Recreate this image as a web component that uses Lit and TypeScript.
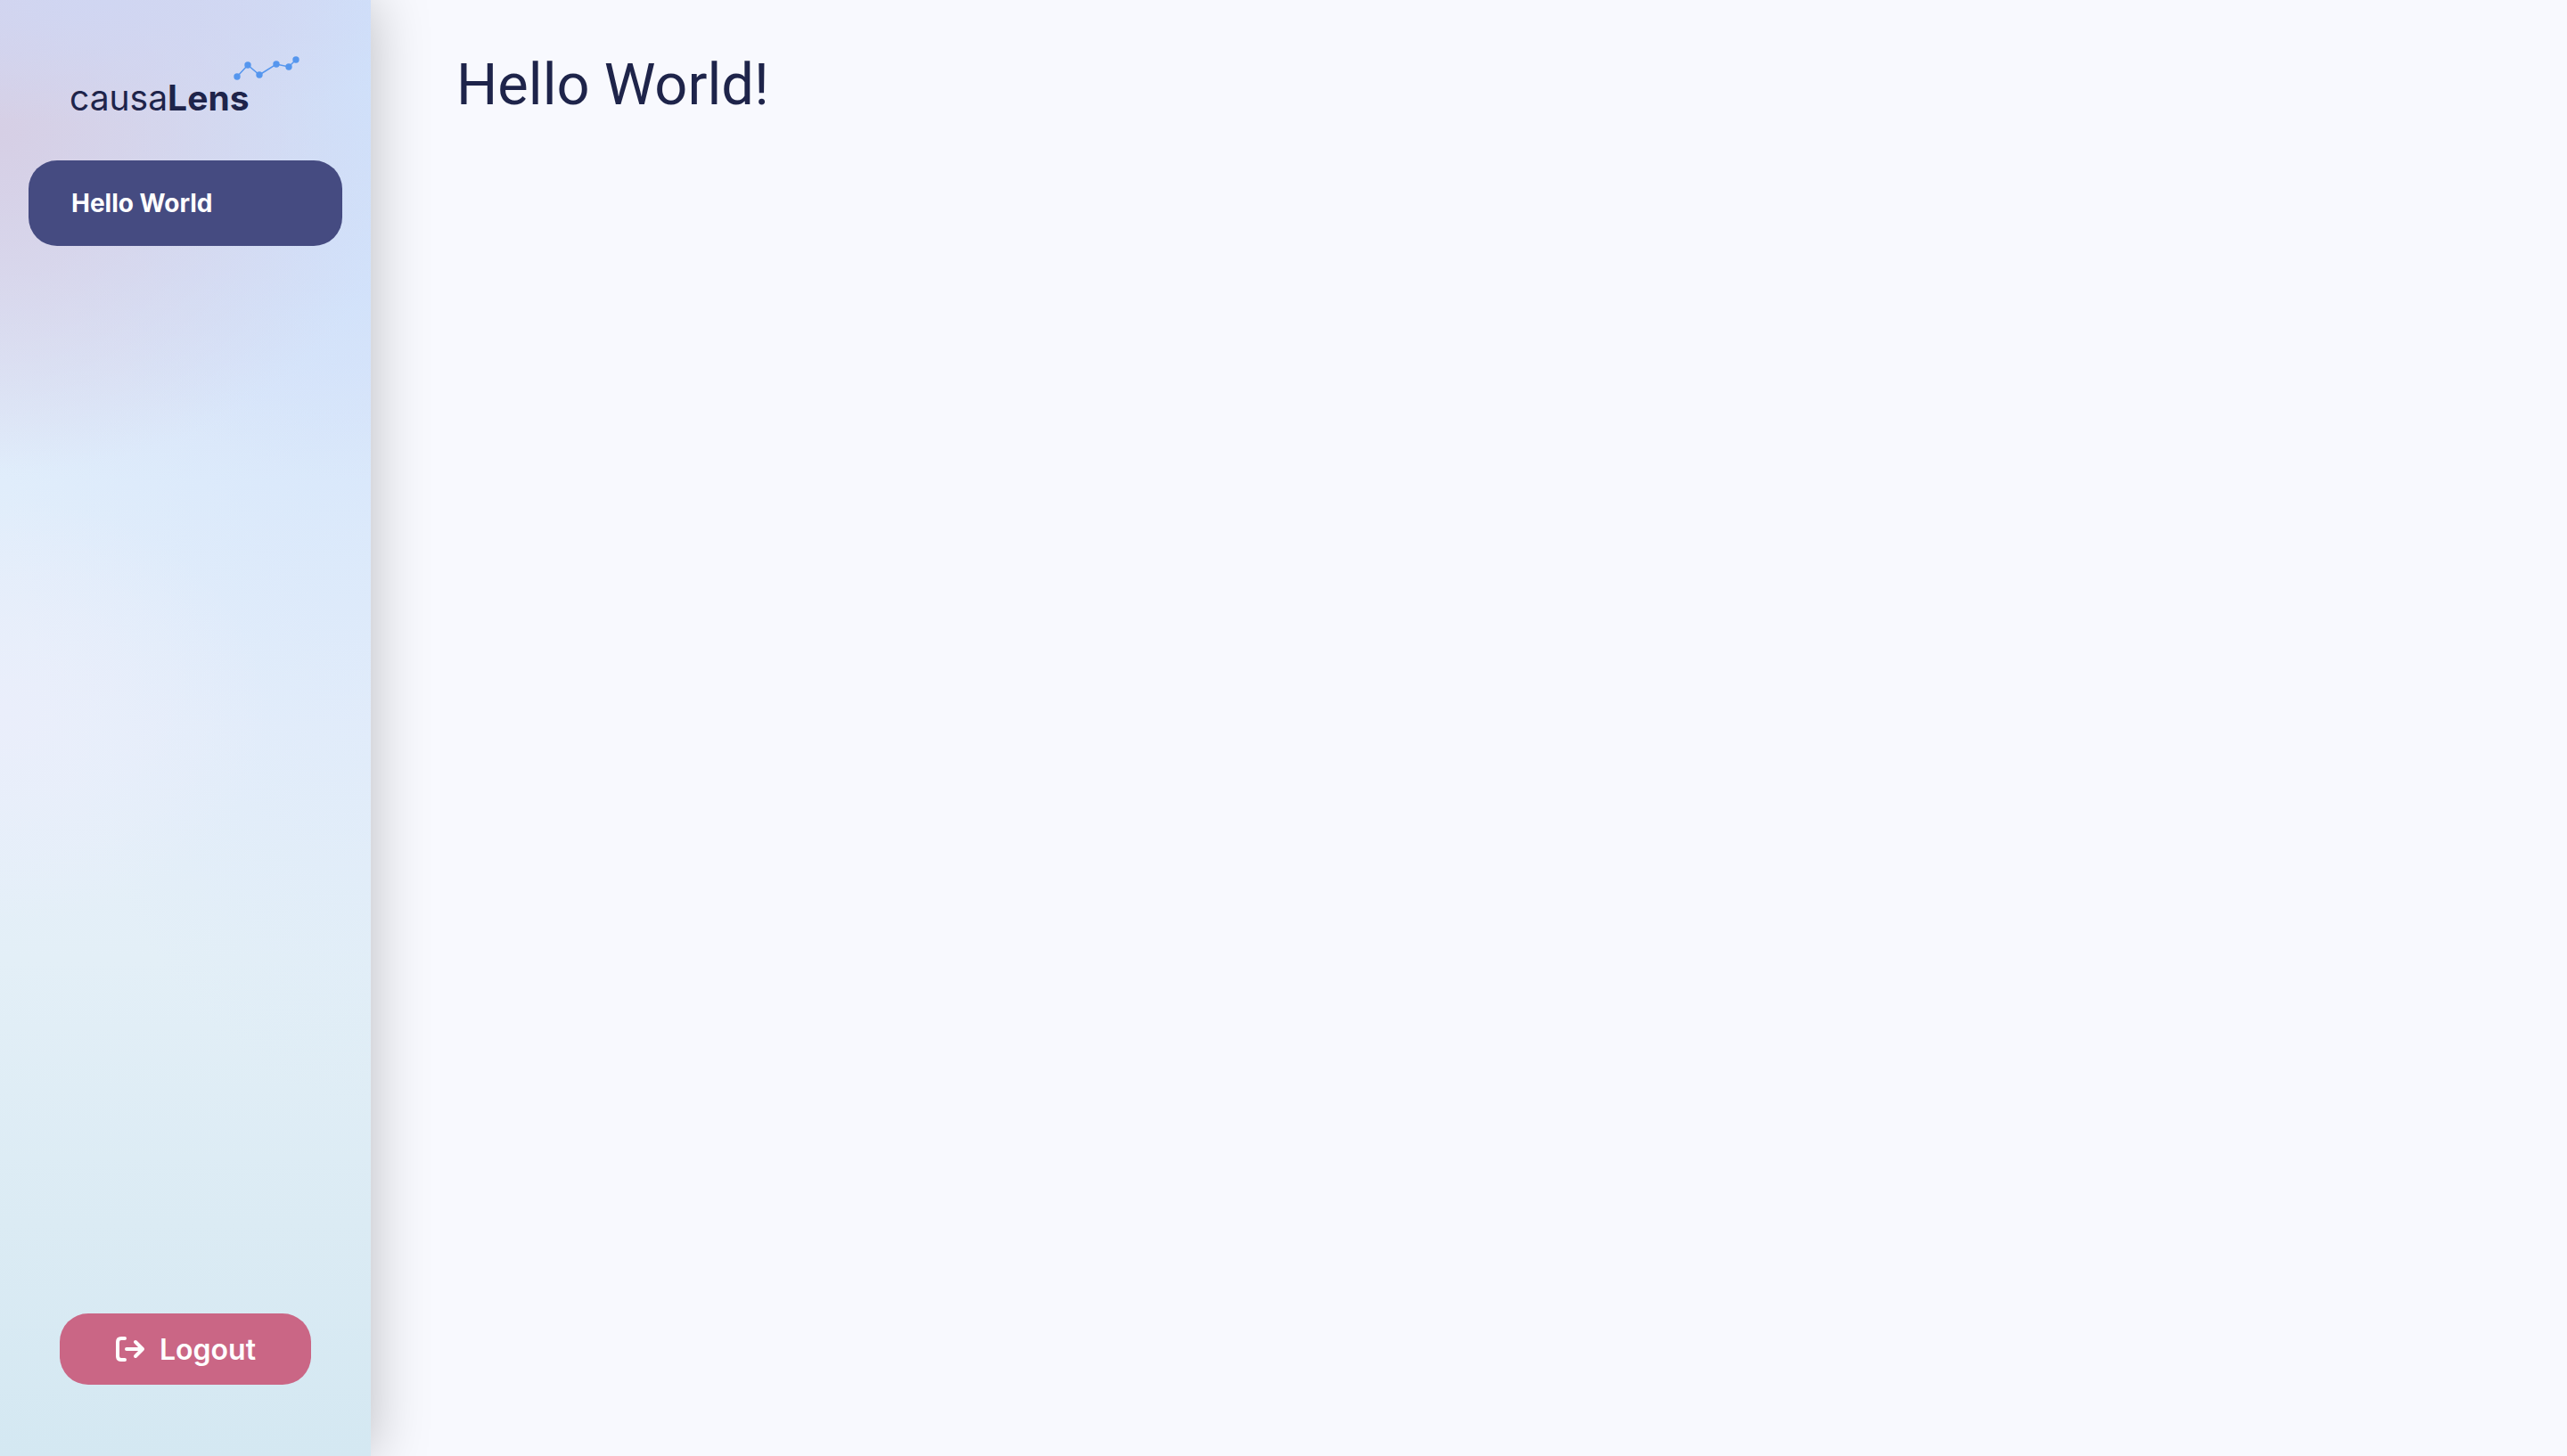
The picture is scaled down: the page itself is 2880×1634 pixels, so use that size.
import { LitElement, html, css, svg } from "lit";
import { customElement } from "lit/decorators.js";

@customElement("app-root")
export class AppRoot extends LitElement {
  static styles = css`
    :host {
      display: block;
      --ink: #1e244a;
      --surface: #f8f9fe;
      font-family: Inter, "Liberation Sans", sans-serif;
      color: var(--ink);
    }

    .shell {
      display: flex;
      min-height: 100vh;
      background: var(--surface);
    }

    .sidebar {
      display: flex;
      flex: 0 0 416px;
      flex-direction: column;
      box-sizing: border-box;
      z-index: 1;
      padding: 56px 32px 80px;
      background:
        radial-gradient(ellipse 400px 140px at 120px 0, #d0d6f2 0%, rgb(208 214 242 / 0) 100%),
        radial-gradient(ellipse 460px 380px at 0 150px, #d6cfe5 0%, rgb(214 207 229 / 0.55) 45%, rgb(214 207 229 / 0) 100%),
        radial-gradient(ellipse 300px 240px at 0 800px, #eaeefb 0%, rgb(234 238 251 / 0) 100%),
        radial-gradient(ellipse 420px 480px at 416px 60px, #cfe2fc 0%, rgb(207 226 252 / 0.6) 50%, rgb(207 226 252 / 0) 100%),
        radial-gradient(ellipse 420px 900px at 416px 340px, rgb(208 225 251 / 0.5) 0%, rgb(208 225 251 / 0) 100%),
        linear-gradient(#d2d8f3 0%, #dbe1f5 18%, #e0edfb 33%, #e6effa 50%, #e3eff7 66%, #dbebf4 84%, #d4e8f2 100%);
      box-shadow: 0 0 60px rgb(0 0 0 / 0.25);
    }

    .brand {
      display: flex;
      flex-direction: column;
      align-self: center;
      width: 260px;
      margin-bottom: 48px;
      color: inherit;
      text-decoration: none;
    }

    .spark {
      align-self: flex-end;
      display: block;
      width: 80px;
      height: 36px;
    }

    .wordmark {
      margin-top: -4px;
      font-size: 39px;
      line-height: 44px;
      white-space: nowrap;
    }

    .wordmark strong {
      font-weight: 700;
    }

    .nav {
      display: flex;
      flex-direction: column;
      gap: 16px;
    }

    .nav-link {
      display: flex;
      align-items: center;
      height: 96px;
      padding: 0 48px;
      border-radius: 32px;
      background: #454b81;
      color: #ffffff;
      font-size: 28px;
      font-weight: 700;
      text-decoration: none;
    }

    .logout {
      display: flex;
      align-items: center;
      align-self: center;
      justify-content: center;
      gap: 16px;
      width: 282px;
      height: 80px;
      margin-top: auto;
      padding: 0;
      border: 0;
      border-radius: 32px;
      background: #ca6685;
      color: #ffffff;
      font: 600 32px Inter, "Liberation Sans", sans-serif;
      cursor: pointer;
    }

    .logout svg {
      width: 34px;
      height: 28px;
    }

    .content {
      flex: 1;
      min-width: 0;
      padding: 50px 96px;
    }

    h1 {
      margin: 0;
      font-family: Roboto, "Liberation Sans", sans-serif;
      font-size: 65px;
      font-weight: 400;
      line-height: 90px;
    }
  `;

  private spark() {
    const points = [
      [8, 30],
      [20, 17],
      [33, 28],
      [52, 16],
      [66, 19],
      [74, 11],
    ];
    return html`<svg class="spark" viewBox="0 0 80 36" aria-hidden="true">
      <polyline points=${points.map((p) => p.join(",")).join(" ")} fill="none" stroke="#5596ee" stroke-width="1.5" />
      ${points.map(([x, y]) => svg`<circle cx=${x} cy=${y} r="3.7" fill="#5596ee" />`)}
    </svg>`;
  }

  render() {
    return html`
      <div class="shell">
        <aside class="sidebar">
          <a class="brand" href="#">
            ${this.spark()}
            <span class="wordmark">causa<strong>Lens</strong></span>
          </a>
          <nav class="nav">
            <a class="nav-link" href="#hello-world" aria-current="page">Hello World</a>
          </nav>
          <button class="logout" type="button">
            <svg viewBox="0 0 34 28" fill="none" stroke="currentColor" stroke-width="4" stroke-linecap="round" stroke-linejoin="round" aria-hidden="true">
              <path d="M11 2H7Q3 2 3 6V22Q3 26 7 26H11" />
              <path d="M13 14H31M23 6L31 14L23 22" />
            </svg>
            <span>Logout</span>
          </button>
        </aside>
        <main class="content">
          <h1>Hello World!</h1>
        </main>
      </div>
    `;
  }
}
